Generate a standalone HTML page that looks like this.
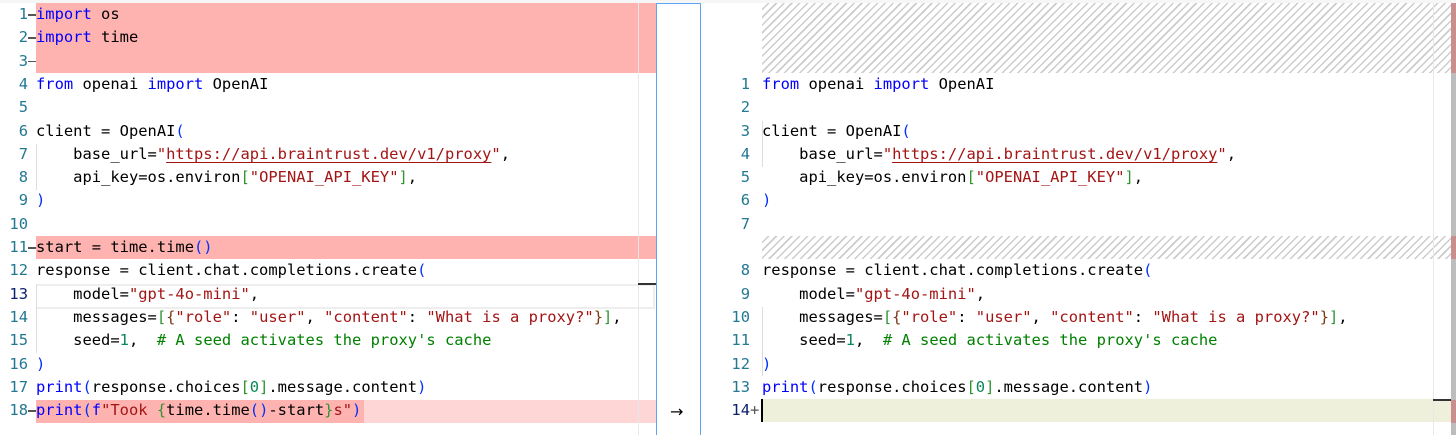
<!DOCTYPE html>
<html><head><meta charset="utf-8"><style>
html,body{margin:0;padding:0;background:#fff;width:1456px;height:435px;overflow:hidden;position:relative}
body{font-family:"DejaVu Sans Mono","Liberation Mono",monospace;font-size:15.45px;color:#000}
.a{position:absolute}
.ln{position:absolute;height:23.3px;line-height:23.3px;white-space:pre}
.num{position:absolute;width:28px;text-align:right;color:#237893;height:23.3px;line-height:23.3px}
.dash{position:absolute;left:28px;width:8px;height:1.5px;background:#555}
.k{color:#0000ff}.s{color:#a31515}.n{color:#098658}.c{color:#008000}.g{color:#319331}.b{color:#7b3814}.p{color:#0431fa}
.u{text-decoration:underline;text-decoration-color:#a31515;text-underline-offset:3px}
.hatch{background:repeating-linear-gradient(135deg,#fff 0 4px,#ccc 4px 5.5px)}
</style></head><body>
<div class="a" style="left:0;top:0;width:1456px;height:3px;background:#f6f6f6"></div>
<!-- left backgrounds -->
<div class="a" style="left:36px;top:3px;width:620px;height:70px;background:#ffb3b0"></div>
<div class="a" style="left:36px;top:236px;width:620px;height:23.3px;background:#ffb3b0"></div>
<div class="a" style="left:36px;top:400px;width:620px;height:23.3px;background:#ffd6d6"></div>
<div class="a" style="left:36px;top:400px;width:328px;height:23.3px;background:#ffb3b0"></div>
<div class="a" style="left:36px;top:284px;width:617px;height:21px;border:2px solid #eee;border-left:none"></div>
<div class="a" style="left:638px;top:3px;width:1px;height:432px;background:#e8e8e8"></div>
<div class="a" style="left:638px;top:283px;width:18px;height:2px;background:#333"></div>
<div class="a" style="left:36px;top:144px;width:1px;height:46px;background:#ddd"></div>
<div class="a" style="left:36px;top:284px;width:1px;height:69px;background:#ddd"></div>
<!-- middle -->
<div class="a" style="left:656px;top:3px;width:43px;height:432px;border:1px solid #5aa5f5;border-bottom:none"></div>
<div class="a" style="left:670px;top:400px;line-height:23.3px;font-family:'DejaVu Sans',sans-serif;font-size:16px">→</div>
<!-- right backgrounds -->
<div class="a hatch" style="left:762px;top:3px;width:689px;height:70px"></div>
<div class="a hatch" style="left:762px;top:236px;width:689px;height:23.3px"></div>
<div class="a" style="left:762px;top:399px;width:689px;height:23px;background:#eef0dc"></div>
<div class="a" style="left:761px;top:399px;width:2px;height:23px;background:#000"></div>
<div class="a" style="left:1433px;top:3px;width:1px;height:432px;background:#e8e8e8"></div>
<div class="a" style="left:1433px;top:399px;width:18px;height:2px;background:#333"></div>
<div class="a" style="left:762px;top:307px;width:1px;height:69px;background:#ddd"></div>
<div class="a" style="left:762px;top:121px;width:1px;height:46px;background:#ddd"></div>
<div class="a" style="left:1451px;top:3px;width:5px;height:432px;background:#bdbdbd"></div>
<div class="a" style="left:1451px;top:3px;width:5px;height:70px;background:#c98f8f"></div>
<div class="a" style="left:1451px;top:236px;width:5px;height:23px;background:#c98f8f"></div>
<div class="a" style="left:1451px;top:400px;width:5px;height:23px;background:#c98f8f"></div>

<!-- left numbers -->
<div style="position:absolute;left:0;top:3px">
<div class="num" style="top:0">1</div><div class="num" style="top:23.3px">2</div><div class="num" style="top:46.6px">3</div><div class="num" style="top:69.9px">4</div><div class="num" style="top:93.2px">5</div><div class="num" style="top:116.5px">6</div><div class="num" style="top:139.8px">7</div><div class="num" style="top:163.1px">8</div><div class="num" style="top:186.4px">9</div><div class="num" style="top:209.7px">10</div><div class="num" style="top:233px">11</div><div class="num" style="top:256.3px">12</div><div class="num" style="top:279.6px;color:#0b216f">13</div><div class="num" style="top:302.9px">14</div><div class="num" style="top:326.2px">15</div><div class="num" style="top:349.5px">16</div><div class="num" style="top:372.8px">17</div><div class="num" style="top:396.1px">18</div>
<div class="dash" style="top:11px"></div><div class="dash" style="top:34.3px"></div><div class="dash" style="top:57.6px"></div><div class="dash" style="top:244px"></div><div class="dash" style="top:407.1px"></div>
</div>
<!-- left code -->
<div style="position:absolute;left:36px;top:3px">
<div class="ln" style="top:0"><span class="k">import</span> os</div>
<div class="ln" style="top:23.3px"><span class="k">import</span> time</div>
<div class="ln" style="top:69.9px"><span class="k">from</span> openai <span class="k">import</span> OpenAI</div>
<div class="ln" style="top:116.5px">client = OpenAI<span class="p">(</span></div>
<div class="ln" style="top:139.8px">    base_url=<span class="s">"<span class="u">https://api.braintrust.dev/v1/proxy</span>"</span>,</div>
<div class="ln" style="top:163.1px">    api_key=os.environ<span class="g">[</span><span class="s">"OPENAI_API_KEY"</span><span class="g">]</span>,</div>
<div class="ln" style="top:186.4px"><span class="p">)</span></div>
<div class="ln" style="top:233px">start = time.time<span class="p">()</span></div>
<div class="ln" style="top:256.3px">response = client.chat.completions.create<span class="p">(</span></div>
<div class="ln" style="top:279.6px">    model=<span class="s">"gpt-4o-mini"</span>,</div>
<div class="ln" style="top:302.9px">    messages=<span class="g">[</span><span class="b">{</span><span class="s">"role"</span>: <span class="s">"user"</span>, <span class="s">"content"</span>: <span class="s">"What is a proxy?"</span><span class="b">}</span><span class="g">]</span>,</div>
<div class="ln" style="top:326.2px">    seed=<span class="n">1</span>,  <span class="c"># A seed activates the proxy's cache</span></div>
<div class="ln" style="top:349.5px"><span class="p">)</span></div>
<div class="ln" style="top:372.8px"><span class="k">print</span><span class="p">(</span>response.choices<span class="g">[</span><span class="n">0</span><span class="g">]</span>.message.content<span class="p">)</span></div>
<div class="ln" style="top:396.1px"><span class="k">print</span><span class="p">(</span><span class="k">f</span><span class="s">"Took </span><span class="g">{</span>time.time<span class="p">()</span>-start<span class="g">}</span><span class="s">s"</span><span class="p">)</span></div>
</div>
<!-- right numbers -->
<div style="position:absolute;left:722px;top:3px">
<div class="num" style="top:69.9px">1</div><div class="num" style="top:93.2px">2</div><div class="num" style="top:116.5px">3</div><div class="num" style="top:139.8px">4</div><div class="num" style="top:163.1px">5</div><div class="num" style="top:186.4px">6</div><div class="num" style="top:209.7px">7</div><div class="num" style="top:256.3px">8</div><div class="num" style="top:279.6px">9</div><div class="num" style="top:302.9px">10</div><div class="num" style="top:326.2px">11</div><div class="num" style="top:349.5px">12</div><div class="num" style="top:372.8px">13</div><div class="num" style="top:396.1px;color:#0b216f">14</div>
<div class="ln" style="left:28px;top:396.1px;color:#555">+</div>
</div>
<!-- right code -->
<div style="position:absolute;left:762px;top:3px">
<div class="ln" style="top:69.9px"><span class="k">from</span> openai <span class="k">import</span> OpenAI</div>
<div class="ln" style="top:116.5px">client = OpenAI<span class="p">(</span></div>
<div class="ln" style="top:139.8px">    base_url=<span class="s">"<span class="u">https://api.braintrust.dev/v1/proxy</span>"</span>,</div>
<div class="ln" style="top:163.1px">    api_key=os.environ<span class="g">[</span><span class="s">"OPENAI_API_KEY"</span><span class="g">]</span>,</div>
<div class="ln" style="top:186.4px"><span class="p">)</span></div>
<div class="ln" style="top:256.3px">response = client.chat.completions.create<span class="p">(</span></div>
<div class="ln" style="top:279.6px">    model=<span class="s">"gpt-4o-mini"</span>,</div>
<div class="ln" style="top:302.9px">    messages=<span class="g">[</span><span class="b">{</span><span class="s">"role"</span>: <span class="s">"user"</span>, <span class="s">"content"</span>: <span class="s">"What is a proxy?"</span><span class="b">}</span><span class="g">]</span>,</div>
<div class="ln" style="top:326.2px">    seed=<span class="n">1</span>,  <span class="c"># A seed activates the proxy's cache</span></div>
<div class="ln" style="top:349.5px"><span class="p">)</span></div>
<div class="ln" style="top:372.8px"><span class="k">print</span><span class="p">(</span>response.choices<span class="g">[</span><span class="n">0</span><span class="g">]</span>.message.content<span class="p">)</span></div>
</div>
</body></html>
